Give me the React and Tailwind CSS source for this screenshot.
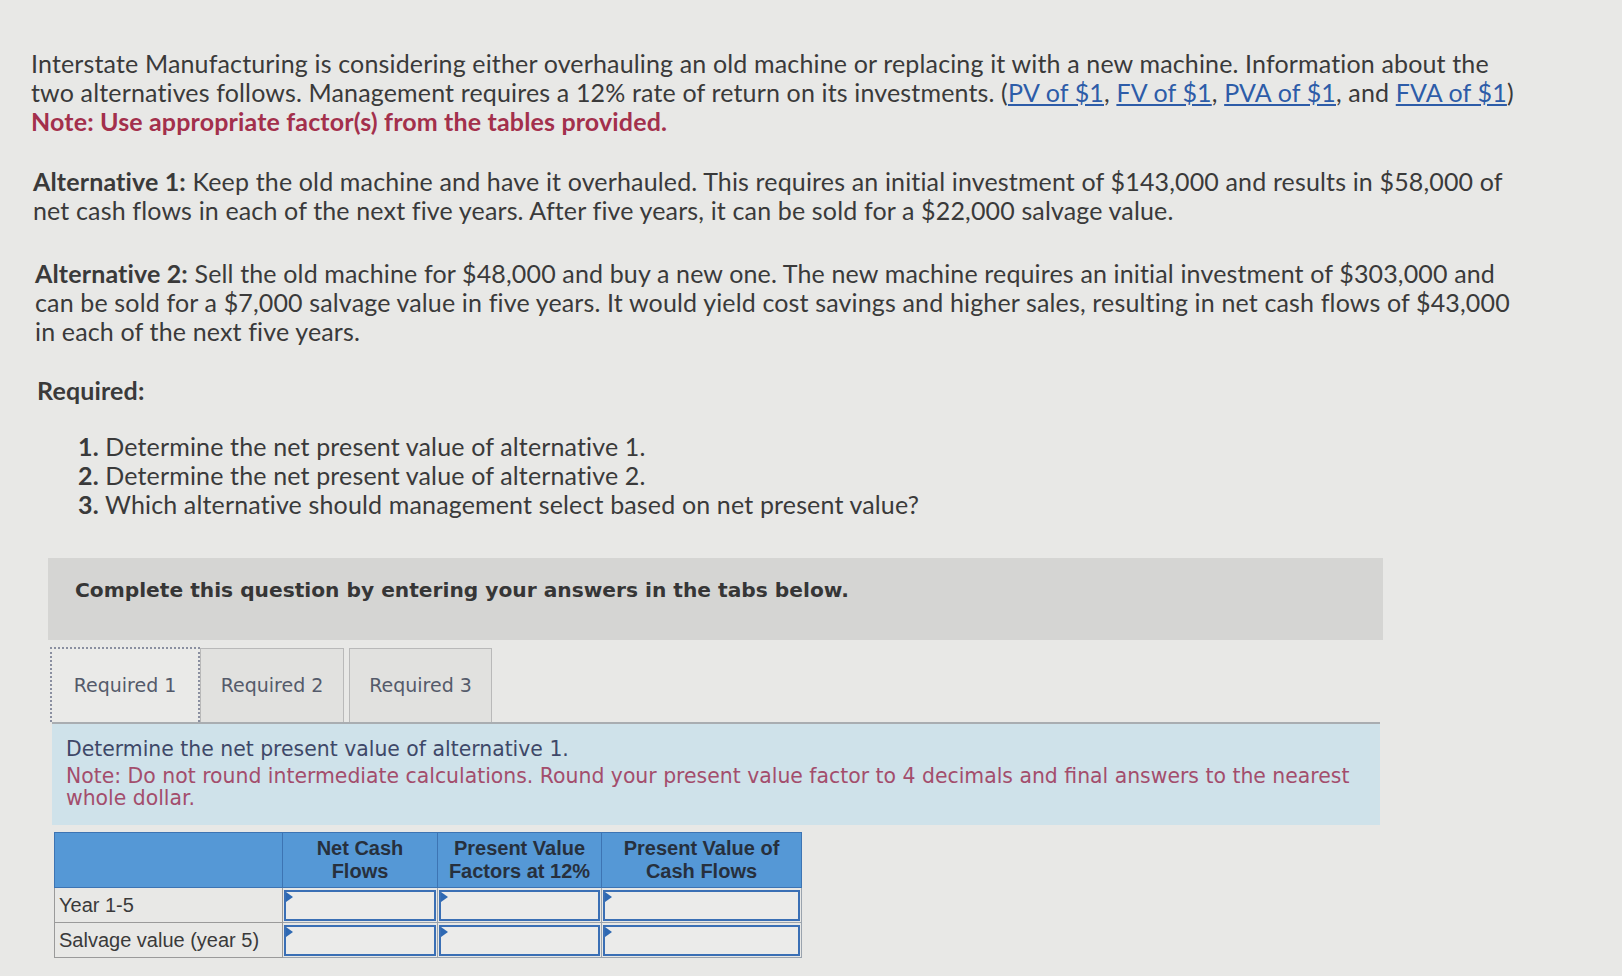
import React from "react";

const Flag = () => (
  <span className="absolute left-0 top-0 w-0 h-0 border-t-[5px] border-b-[5px] border-l-[7px] border-t-transparent border-b-transparent border-l-[#2f69b3]" />
);

const InputCell = () => (
  <td className="p-0 border border-[#9aa3ad]">
    <div className="relative h-[31px] m-[1px] border-2 border-[#3a6fb5] bg-[#ebebea]">
      <Flag />
    </div>
  </td>
);

export default function App() {
  const main = { fontFamily: "Lato, 'Open Sans', sans-serif" };
  const verd = { fontFamily: "'DejaVu Sans', Verdana, sans-serif" };
  const arial = { fontFamily: "'Liberation Sans', Arial, sans-serif" };
  return (
    <div className="w-[1622px] h-[976px] overflow-hidden bg-[#e8e8e6]">
      <div className="pt-[49px] pl-[31px] text-[25px] leading-[29px] tracking-[0.15px] text-[#3a3a3a]" style={main}>
        <p>
          Interstate Manufacturing is considering either overhauling an old machine or replacing it with a new machine. Information about the
          <br />
          two alternatives follows. Management requires a 12% rate of return on its investments. (
          <span className="text-[#2d5ca8] underline underline-offset-2">PV of $1</span>,{" "}
          <span className="text-[#2d5ca8] underline underline-offset-2">FV of $1</span>,{" "}
          <span className="text-[#2d5ca8] underline underline-offset-2">PVA of $1</span>, and{" "}
          <span className="text-[#2d5ca8] underline underline-offset-2">FVA of $1</span>)
          <br />
          <span className="font-bold text-[#a3304c]">Note: Use appropriate factor(s) from the tables provided.</span>
        </p>

        <p className="mt-[31px] ml-[2px]">
          <span className="font-bold">Alternative 1:</span> Keep the old machine and have it overhauled. This requires an initial investment of $143,000 and results in $58,000 of
          <br />
          net cash flows in each of the next five years. After five years, it can be sold for a $22,000 salvage value.
        </p>

        <p className="mt-[34px] ml-[4px]">
          <span className="font-bold">Alternative 2:</span> Sell the old machine for $48,000 and buy a new one. The new machine requires an initial investment of $303,000 and
          <br />
          can be sold for a $7,000 salvage value in five years. It would yield cost savings and higher sales, resulting in net cash flows of $43,000
          <br />
          in each of the next five years.
        </p>

        <p className="mt-[30px] ml-[6px] font-bold">Required:</p>

        <ol className="mt-[27px] ml-[47px]">
          <li><span className="font-bold">1.</span> Determine the net present value of alternative 1.</li>
          <li><span className="font-bold">2.</span> Determine the net present value of alternative 2.</li>
          <li><span className="font-bold">3.</span> Which alternative should management select based on net present value?</li>
        </ol>
      </div>

      <div className="ml-[48px] mt-[39px] w-[1335px] h-[82px] bg-[#d5d5d3] pl-[27px] pt-[20px]">
        <p className="text-[20.2px] font-bold text-[#363636] leading-[24px]" style={verd}>
          Complete this question by entering your answers in the tabs below.
        </p>
      </div>

      <div className="ml-[50px] mt-[7px] flex items-end text-[19px] text-[#545a6a]" style={verd}>
        <div className="w-[150px] h-[75px] flex items-center justify-center border-2 border-dotted border-[#8a8fa0] border-b-0 bg-[#eaeae8] relative z-10">
          Required 1
        </div>
        <div className="w-[144px] h-[74px] flex items-center justify-center border border-[#b9b9b9] border-b-0 bg-[#e1e1df]">
          Required 2
        </div>
        <div className="ml-[5px] w-[143px] h-[74px] flex items-center justify-center border border-[#b9b9b9] border-b-0 bg-[#e1e1df]">
          Required 3
        </div>
      </div>

      <div className="ml-[52px] w-[1328px] h-[103px] bg-[#cfe2ea] border-t-2 border-[#a9adb1] pl-[14px] pt-[14px] text-[20.4px] leading-[22px]" style={verd}>
        <p className="text-[#3e4868]">Determine the net present value of alternative 1.</p>
        <p className="mt-[5px] text-[#a34d6c]">
          Note: Do not round intermediate calculations. Round your present value factor to 4 decimals and final answers to the nearest
          <br />
          whole dollar.
        </p>
      </div>

      <table className="ml-[54px] mt-[7px] border-collapse text-[20px]" style={arial}>
        <thead>
          <tr className="bg-[#5598d6] text-[#27303d] leading-[23px] h-[55px]">
            <th className="w-[228px] border border-[#3d74b3]"></th>
            <th className="w-[155px] border border-[#3d74b3] font-bold">Net Cash<br />Flows</th>
            <th className="w-[164px] border border-[#3d74b3] font-bold">Present Value<br />Factors at 12%</th>
            <th className="w-[200px] border border-[#3d74b3] font-bold">Present Value of<br />Cash Flows</th>
          </tr>
        </thead>
        <tbody className="text-[#3a3a3a]">
          <tr>
            <td className="border border-[#9a9a9a] pl-[4px] h-[35px] p-0">Year 1-5</td>
            <InputCell />
            <InputCell />
            <InputCell />
          </tr>
          <tr>
            <td className="border border-[#9a9a9a] pl-[4px] h-[35px] p-0">Salvage value (year 5)</td>
            <InputCell />
            <InputCell />
            <InputCell />
          </tr>
        </tbody>
      </table>
    </div>
  );
}
